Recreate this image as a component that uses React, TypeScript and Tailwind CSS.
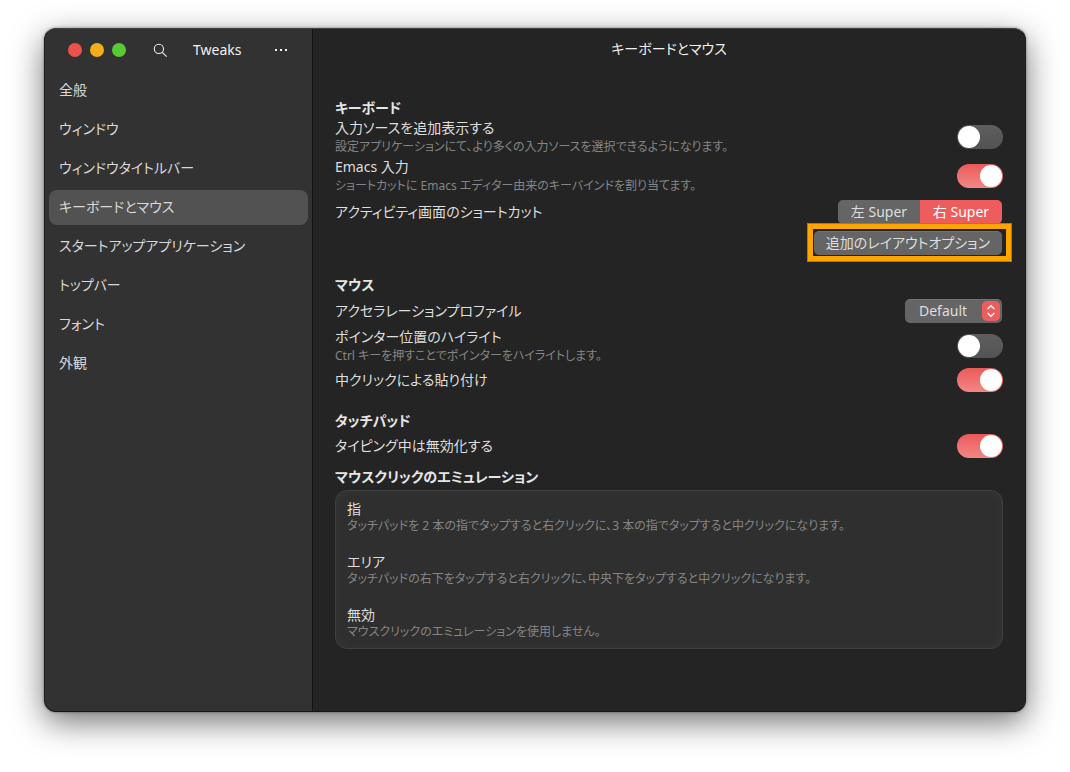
import { useState } from "react";
import type { ReactNode } from "react";

const NAV = [
  "全般",
  "ウィンドウ",
  "ウィンドウタイトルバー",
  "キーボードとマウス",
  "スタートアップアプリケーション",
  "トップバー",
  "フォント",
  "外観",
];

const CLICK_METHODS = [
  {
    title: "指",
    desc: "タッチパッドを 2 本の指でタップすると右クリックに、3 本の指でタップすると中クリックになります。",
  },
  {
    title: "エリア",
    desc: "タッチパッドの右下をタップすると右クリックに、中央下をタップすると中クリックになります。",
  },
  { title: "無効", desc: "マウスクリックのエミュレーションを使用しません。" },
];

function SearchIcon() {
  return (
    <svg viewBox="0 0 16 16" className="h-4 w-4" fill="none" stroke="currentColor" strokeWidth="1.1">
      <circle cx="6.9" cy="6.9" r="4.6" />
      <path d="M10.2 10.3 L14.7 14.6" />
    </svg>
  );
}

function MoreIcon() {
  return (
    <svg viewBox="0 0 16 16" className="h-4 w-4" fill="currentColor">
      <rect x="2" y="7" width="2" height="2" />
      <rect x="7" y="7" width="2" height="2" />
      <rect x="12" y="7" width="2" height="2" />
    </svg>
  );
}

function Heading({ children, className }: { children: ReactNode; className?: string }) {
  return <h2 className={`leading-5 font-bold text-[#e6e6e6] ${className ?? ""}`}>{children}</h2>;
}

function SwitchRow({
  id,
  label,
  desc,
  on = false,
  className,
}: {
  id: string;
  label: string;
  desc?: string;
  on?: boolean;
  className?: string;
}) {
  const [checked, setChecked] = useState(on);
  return (
    <div className={`flex items-center justify-between ${className ?? ""}`}>
      <label htmlFor={id}>
        <span className="block leading-5">{label}</span>
        {desc && <span className="block text-xs leading-[18px] text-[#858585]">{desc}</span>}
      </label>
      <input
        id={id}
        type="checkbox"
        role="switch"
        checked={checked}
        onChange={(e) => setChecked(e.target.checked)}
        className="h-6 w-[46px] shrink-0 appearance-none rounded-full bg-linear-to-b from-[#5e5e5e] to-[#535353] p-px before:block before:size-[22px] before:rounded-full before:bg-white checked:from-[#ea5a5a] checked:to-[#f28686] checked:before:ml-[22px]"
      />
    </div>
  );
}

export default function App() {
  const [page, setPage] = useState("キーボードとマウス");
  const [side, setSide] = useState("right");

  return (
    <div className="flex min-h-screen bg-white px-11 pt-7 pb-[60px] font-['Noto_Sans','Noto_Sans_CJK_JP',sans-serif] text-[14px] leading-5 text-[#dedede] [font-feature-settings:'palt']">
      <div className="flex flex-1 overflow-hidden rounded-xl border border-x-[#1f1f1f] border-t-[#414141] border-b-[#161616] bg-[#242424] shadow-[0_0_3px_rgba(0,0,0,0.45),0_10px_32px_rgba(0,0,0,0.55)]">
        <aside className="w-[268px] shrink-0 border-r border-[#131313] bg-[#323232]">
          <header className="flex h-[42px] items-center px-[23px] text-[#f0f0f0]">
            <div className="flex gap-2">
              <button aria-label="閉じる" className="size-[14px] rounded-full bg-[#ec524c]" />
              <button aria-label="最小化" className="size-[14px] rounded-full bg-[#f2ae1c]" />
              <button aria-label="最大化" className="size-[14px] rounded-full bg-[#58ca34]" />
            </div>
            <button aria-label="検索" className="ml-[26px]">
              <SearchIcon />
            </button>
            <h1 className="ml-[25px] flex-1">Tweaks</h1>
            <button aria-label="メニュー">
              <MoreIcon />
            </button>
          </header>
          <nav className="flex flex-col gap-1 px-1 pt-0.5">
            {NAV.map((item) => (
              <button
                key={item}
                onClick={() => setPage(item)}
                className={`h-[35px] rounded-lg px-[10px] pb-0.5 text-left text-[#d8d8d8] ${item === page ? "bg-[#525252]" : ""}`}
              >
                {item}
              </button>
            ))}
          </nav>
        </aside>

        <main className="min-w-0 flex-1">
          <header className="flex h-[42px] items-center justify-center pb-0.5 text-[#f0f0f0]">{page}</header>

          <div className="px-[22px] pt-[27px] pb-6">
            <Heading>キーボード</Heading>
            <SwitchRow
              id="sources"
              label="入力ソースを追加表示する"
              desc="設定アプリケーションにて、より多くの入力ソースを選択できるようになります。"
            />
            <SwitchRow
              id="emacs"
              label="Emacs 入力"
              desc="ショートカットに Emacs エディター由来のキーバインドを割り当てます。"
              on
              className="mt-px"
            />
            <div className="mt-[5px] flex h-6 items-center justify-between pr-px">
              <span>アクティビティ画面のショートカット</span>
              <div className="flex h-6 overflow-hidden rounded-[5px]">
                <button
                  onClick={() => setSide("left")}
                  className={`w-[82px] ${side === "left" ? "bg-[#ee5d5d] text-white" : "bg-[#656565]"}`}
                >
                  左 Super
                </button>
                <button
                  onClick={() => setSide("right")}
                  className={`w-[82px] ${side === "right" ? "bg-[#ee5d5d] text-white" : "bg-[#656565]"}`}
                >
                  右 Super
                </button>
              </div>
            </div>
            <div className="mt-[7px] flex justify-end pr-px">
              <div className="relative">
                <button className="block h-6 rounded-[5px] border-t border-[#727272] bg-[#656565] px-3 pb-0.5">
                  追加のレイアウトオプション
                </button>
                <span className="pointer-events-none absolute -top-2 -right-[10px] -bottom-[7px] -left-[7px] border-[6px] border-[#ffa500] outline outline-[#b97800] -outline-offset-1" />
              </div>
            </div>

            <Heading className="mt-5">マウス</Heading>
            <div className="mt-1 flex h-6 items-center justify-between pr-px">
              <label htmlFor="accel">アクセラレーションプロファイル</label>
              <div className="relative">
                <select
                  id="accel"
                  className="block h-6 w-[97px] appearance-none rounded-[5px] border-t border-[#727272] bg-[#656565] pb-0.5 pl-[14px]"
                >
                  <option>Default</option>
                  <option>Adaptive</option>
                  <option>Flat</option>
                </select>
                <span className="pointer-events-none absolute top-0.5 right-0.5 flex h-5 w-[18px] items-center justify-center rounded-[5px] bg-[#ee5d5d]">
                  <svg viewBox="0 0 10 14" className="h-[14px] w-[10px]" fill="none" stroke="white" strokeWidth="1.4">
                    <path d="M1.6 5 L5 1.8 L8.4 5 M1.6 9 L5 12.2 L8.4 9" />
                  </svg>
                </span>
              </div>
            </div>
            <SwitchRow
              id="locate"
              label="ポインター位置のハイライト"
              desc="Ctrl キーを押すことでポインターをハイライトします。"
              className="mt-1"
            />
            <SwitchRow id="paste" label="中クリックによる貼り付け" on className="mt-[3px]" />

            <Heading className="mt-[19px]">タッチパッド</Heading>
            <SwitchRow id="typing" label="タイピング中は無効化する" on className="mt-[3px]" />

            <Heading className="mt-[9px]">マウスクリックのエミュレーション</Heading>
            <div className="mt-[3px] flex flex-col gap-[19px] rounded-xl border border-[#404040] bg-[#2f2f2f] px-[10px] pt-[9px] pb-2 shadow-[inset_0_0_14px_rgba(255,255,255,0.03)]">
              {CLICK_METHODS.map((m) => (
                <button key={m.title} className="block px-px text-left">
                  <span className="block leading-[17px]">{m.title}</span>
                  <span className="block text-xs leading-[17px] text-[#858585]">{m.desc}</span>
                </button>
              ))}
            </div>
          </div>
        </main>
      </div>
    </div>
  );
}
